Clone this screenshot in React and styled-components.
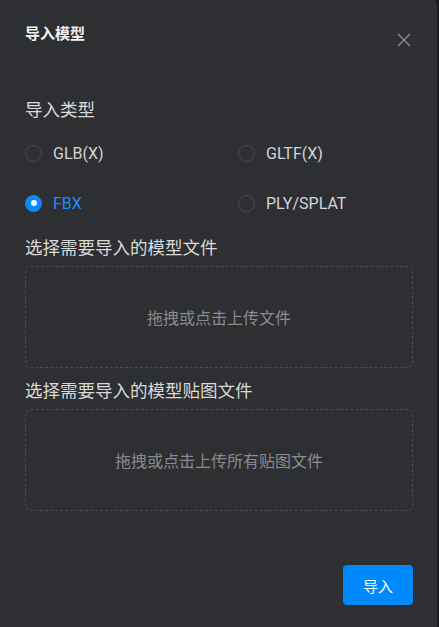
import React, { useState } from "react";
import styled, { createGlobalStyle } from "styled-components";

const Global = createGlobalStyle`
  html, body { margin: 0; padding: 0; background: #1b1c1f; }
  body { font-family: Roboto, "Noto Sans CJK SC", sans-serif; }
  * { box-sizing: border-box; }
`;

const Panel = styled.div`
  width: 437px;
  height: 627px;
  background: #2e2f33;
  border-top-right-radius: 4px;
  display: flex;
  flex-direction: column;
  padding: 0 24px 0 25px;
`;

const Header = styled.div`
  display: flex;
  align-items: center;
  justify-content: space-between;
  height: 66px;
`;

const Title = styled.div`
  font-family: "Noto Sans CJK SC", sans-serif;
  font-size: 15px;
  font-weight: 700;
  color: #f2f2f2;
  line-height: 20px;
`;

const Close = styled.button`
  background: none;
  border: 0;
  padding: 0;
  width: 14px;
  height: 14px;
  margin-top: 14px;
  margin-right: 2px;
  cursor: pointer;
  display: flex;
`;

const Label = styled.div`
  font-family: "Noto Sans CJK SC", sans-serif;
  font-size: 17.5px;
  color: #d9d9d9;
  line-height: 24px;
  margin-top: ${(p) => p.$mt || 0}px;
`;

const RadioGrid = styled.div`
  display: grid;
  grid-template-columns: 213px 1fr;
  row-gap: 26px;
  margin-top: 20px;
`;

const RadioItem = styled.label`
  display: flex;
  align-items: center;
  gap: 11px;
  height: 24px;
  cursor: pointer;
  font-family: Roboto, sans-serif;
  font-size: 16px;
  color: ${(p) => (p.$checked ? "#1a8cff" : "#d4d4d4")};
`;

const Circle = styled.span`
  width: 17px;
  height: 17px;
  border-radius: 50%;
  flex: none;
  display: flex;
  align-items: center;
  justify-content: center;
  border: 1px solid ${(p) => (p.$checked ? "#0a89ff" : "#4a4b50")};
  background: ${(p) => (p.$checked ? "#0a89ff" : "transparent")};
  &::after {
    content: "";
    width: 6px;
    height: 6px;
    border-radius: 50%;
    background: #fff;
    display: ${(p) => (p.$checked ? "block" : "none")};
  }
`;

const Drop = styled.div`
  margin-top: ${(p) => p.$mt || 0}px;
  height: 102px;
  border: 1px dashed #4b4c51;
  border-radius: 6px;
  display: flex;
  align-items: center;
  justify-content: center;
  font-family: "Noto Sans CJK SC", sans-serif;
  font-size: 16px;
  color: #8a8b8e;
  cursor: pointer;
`;

const Footer = styled.div`
  display: flex;
  justify-content: flex-end;
  margin-top: 54px;
`;

const Button = styled.button`
  width: 70px;
  height: 40px;
  background: #0088ff;
  color: #fff;
  border: 0;
  border-radius: 4px;
  font-family: "Noto Sans CJK SC", sans-serif;
  font-size: 15px;
  cursor: pointer;
`;

const options = ["GLB(X)", "GLTF(X)", "FBX", "PLY/SPLAT"];

export default function App() {
  const [sel, setSel] = useState("FBX");
  return (
    <>
      <Global />
      <Panel>
        <Header>
          <Title>导入模型</Title>
          <Close aria-label="close">
            <svg width="14" height="14" viewBox="0 0 14 14">
              <path d="M1 1L13 13M13 1L1 13" stroke="#8e8f93" strokeWidth="1.3" fill="none" />
            </svg>
          </Close>
        </Header>
        <Label $mt={31}>导入类型</Label>
        <RadioGrid>
          {options.map((o) => (
            <RadioItem key={o} $checked={sel === o} onClick={() => setSel(o)}>
              <Circle $checked={sel === o} />
              {o}
            </RadioItem>
          ))}
        </RadioGrid>
        <Label $mt={20}>选择需要导入的模型文件</Label>
        <Drop $mt={7}>拖拽或点击上传文件</Drop>
        <Label $mt={10}>选择需要导入的模型贴图文件</Label>
        <Drop $mt={7}>拖拽或点击上传所有贴图文件</Drop>
        <Footer>
          <Button>导入</Button>
        </Footer>
      </Panel>
    </>
  );
}
